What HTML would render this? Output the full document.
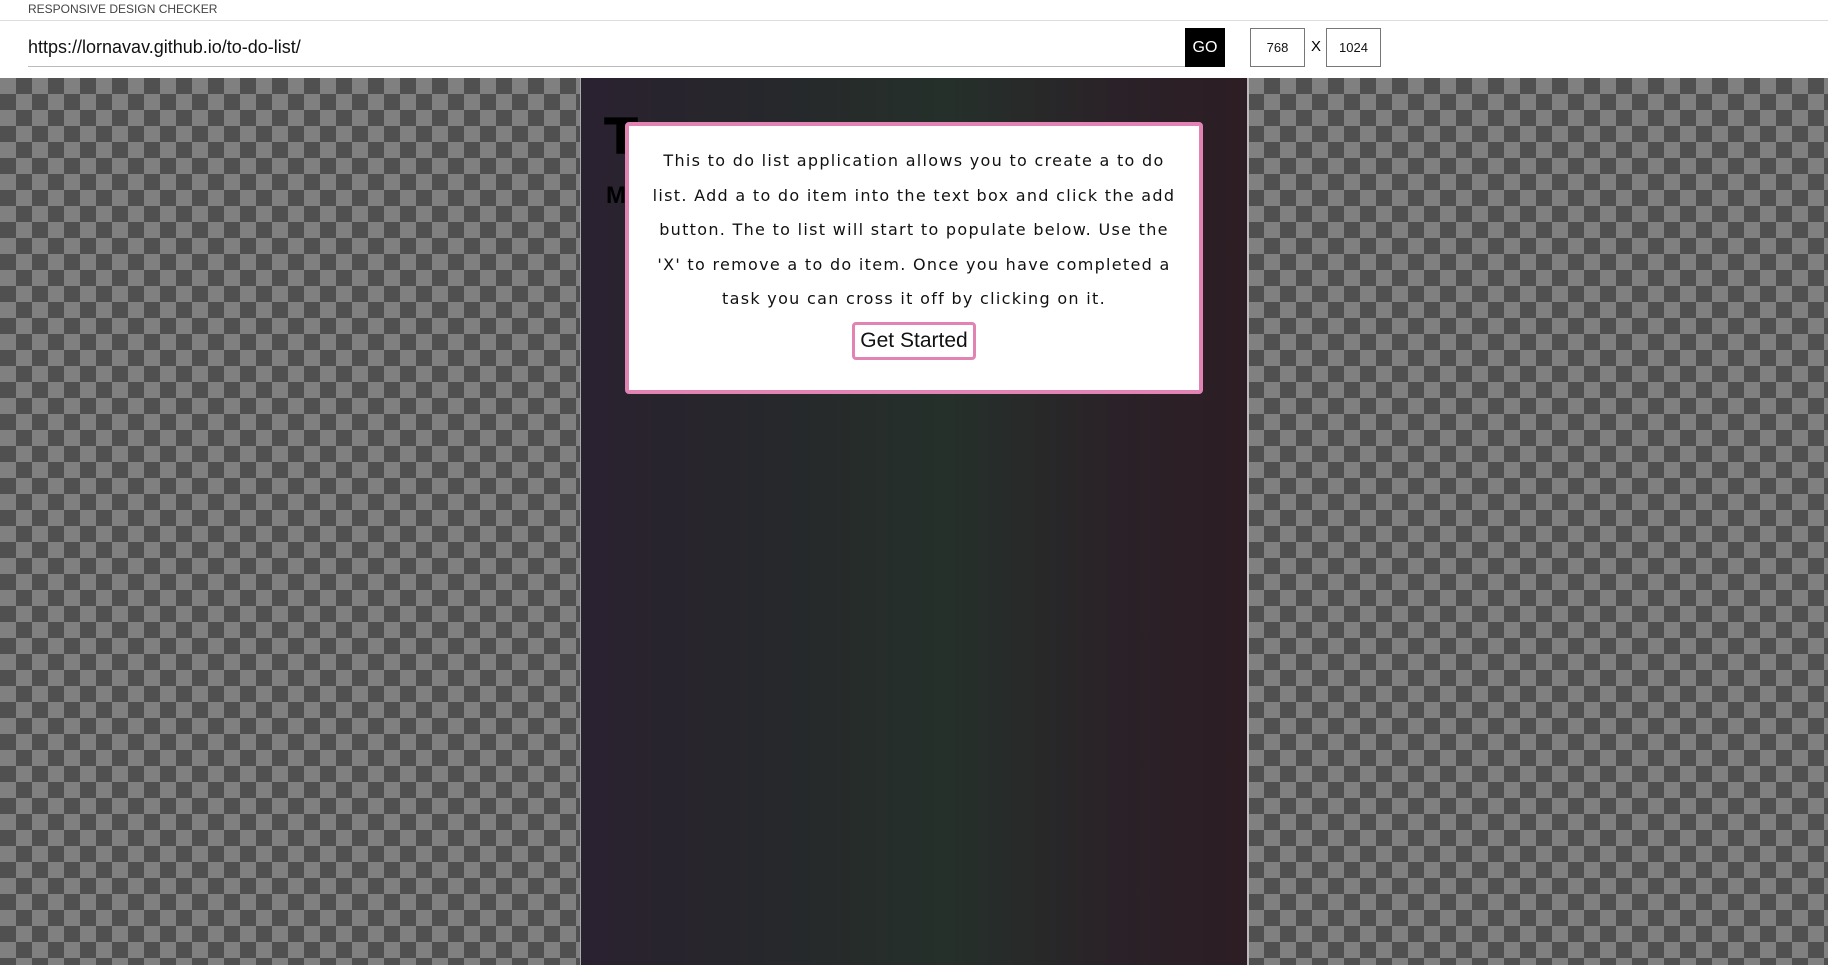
<!DOCTYPE html>
<html><head><meta charset="utf-8"><style>
*{margin:0;padding:0;box-sizing:border-box}
body{width:1828px;height:965px;overflow:hidden;background:#fff;font-family:"Liberation Sans",sans-serif;position:relative}
.title{position:absolute;left:28px;top:2px;font-size:12px;color:#444}
.hl{position:absolute;left:0;top:20px;width:1828px;height:1px;background:#ddd}
.url{position:absolute;left:28px;top:37px;font-size:18px;color:#111}
.ul{position:absolute;left:28px;top:66px;width:1157px;height:1px;background:#bbb}
.go{position:absolute;left:1185px;top:28px;width:40px;height:39px;background:#000;color:#fff;font-size:16px;text-align:center;line-height:39px}
.inp{position:absolute;top:28px;width:55px;height:39px;border:1px solid #777;font-size:13px;text-align:center;line-height:37px;color:#111}
.x{position:absolute;left:1311px;top:38px;font-size:15px}
.chk{position:absolute;left:0;top:78px;width:1828px;height:887px;background-color:#808080;
background-image:linear-gradient(45deg,#505050 25%,transparent 25%,transparent 75%,#505050 75%),linear-gradient(45deg,#505050 25%,transparent 25%,transparent 75%,#505050 75%);
background-size:32px 32px;background-position:0 0,16px 16px}
.frame{position:absolute;left:580px;top:78px;width:669px;height:887px;background:linear-gradient(90deg,#2a2130 0%,#26282b 30%,#25302a 55%,#2a2228 80%,#2d1d24 100%);border-left:1px solid #aaa;border-right:2px solid #bbb}
.T{position:absolute;left:604px;top:108px;font-size:50px;font-weight:bold;color:#000;font-family:"DejaVu Sans",sans-serif}
.M{position:absolute;left:606px;top:182px;font-size:24px;font-weight:bold;color:#000}
.modal{position:absolute;left:625px;top:122px;width:578px;height:272px;background:#fff;border:4px solid #e284b3;border-radius:4px;text-align:center}
.txt{margin:18px 0 0;font-family:"DejaVu Sans",sans-serif;font-size:16px;letter-spacing:1.3px;line-height:34.6px;color:#111;white-space:nowrap}
.btn{display:inline-block;margin-top:5px;width:124px;height:38px;border:3px solid #e284b3;border-radius:4px;font-size:21px;line-height:32px;color:#111}
</style></head><body>
<div class="title">RESPONSIVE DESIGN CHECKER</div>
<div class="hl"></div>
<div class="url">https://lornavav.github.io/to-do-list/</div>
<div class="ul"></div>
<div class="go">GO</div>
<div class="inp" style="left:1250px">768</div>
<div class="x">X</div>
<div class="inp" style="left:1326px">1024</div>
<div class="chk"></div>
<div class="frame"></div>
<div class="T">T</div>
<div class="M">M</div>
<div class="modal">
<div class="txt">This to do list application allows you to create a to do<br>list. Add a to do item into the text box and click the add<br>button. The to list will start to populate below. Use the<br>'X' to remove a to do item. Once you have completed a<br>task you can cross it off by clicking on it.</div>
<div class="btn">Get Started</div>
</div>
</body></html>
